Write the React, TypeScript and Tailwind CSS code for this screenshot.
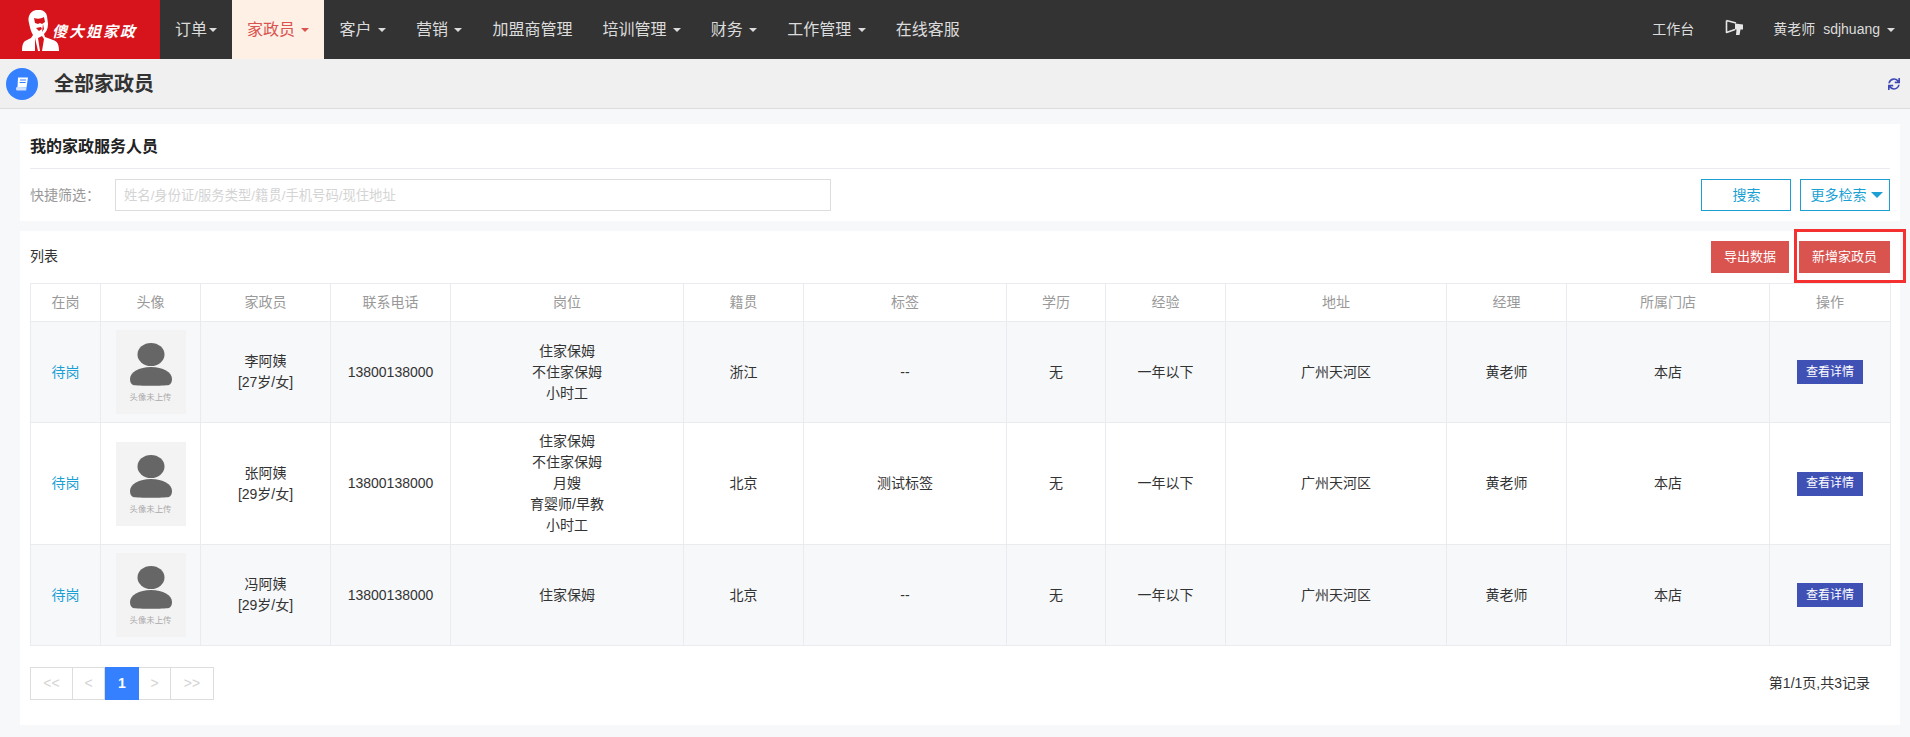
import { FaSync } from "react-icons/fa";

const FONT = "font-['Liberation_Sans','Noto_Sans_CJK_SC',sans-serif]";

const navItems = [
  { label: "订单", caret: "tight" },
  { label: "家政员", caret: "wide", active: true },
  { label: "客户", caret: "wide" },
  { label: "营销", caret: "wide" },
  { label: "加盟商管理" },
  { label: "培训管理", caret: "wide" },
  { label: "财务", caret: "wide" },
  { label: "工作管理", caret: "wide" },
  { label: "在线客服" },
];

const columns = [
  { title: "在岗", width: "w-[70px]" },
  { title: "头像", width: "w-[100px]" },
  { title: "家政员", width: "w-[130px]" },
  { title: "联系电话", width: "w-[120px]" },
  { title: "岗位", width: "w-[233px]" },
  { title: "籍贯", width: "w-[120px]" },
  { title: "标签", width: "w-[203px]" },
  { title: "学历", width: "w-[99px]" },
  { title: "经验", width: "w-[120px]" },
  { title: "地址", width: "w-[221px]" },
  { title: "经理", width: "w-[120px]" },
  { title: "所属门店", width: "w-[203px]" },
  { title: "操作", width: "w-[121px]" },
];

const rows = [
  { name: "李阿姨", age: "[27岁/女]", jobs: ["住家保姆", "不住家保姆", "小时工"], place: "浙江", tag: "--" },
  { name: "张阿姨", age: "[29岁/女]", jobs: ["住家保姆", "不住家保姆", "月嫂", "育婴师/早教", "小时工"], place: "北京", tag: "测试标签" },
  { name: "冯阿姨", age: "[29岁/女]", jobs: ["住家保姆"], place: "北京", tag: "--" },
];

const cell = "border border-[#e9ebee] text-center align-middle p-2 leading-[21px]";

function Caret({ className }: { className: string }) {
  return <span className={`inline-block w-0 h-0 align-middle border-x-4 border-x-transparent border-t-4 ${className}`} />;
}

function Logo() {
  return (
    <div className="w-[160px] h-full bg-[#d7141c] flex items-center shrink-0 text-white">
      <svg width="38" height="41" viewBox="0 0 38 41" className="ml-[22px] mt-[1px] shrink-0" fill="#fff">
        <path d="M7 13C5 6 9 1 14 0c5-1 10 1 11 6l1 8c0 5-2 8-4 10l1 3 8 3c4 1 6 4 6 11H0c0-6 1-8 3-10l6-3 2-3c-2-3-3-7-4-12z" />
        <path d="M12 8c3 1 7 1 10-1l1 5-3 2-2-1-2 1-3-1zM14 18l5-1 1 2-3 2zM21 14l1 5-2 3z" fill="#d7141c" />
        <path d="M13 28l3 13h-3zM20 26l2 3-2 12h-2l-2-13z" fill="#d7141c" />
      </svg>
      <span className="ml-[-8px] mt-[1px] text-[15px] tracking-[2px] leading-none font-bold italic whitespace-nowrap font-['Noto_Sans_CJK_SC',sans-serif]">
        傻大姐家政
      </span>
    </div>
  );
}

function Header() {
  return (
    <header className="h-[59px] bg-[#333333] flex text-[16px] text-[#dcdcdc]">
      <Logo />
      <nav className="flex">
        {navItems.map((item) => (
          <div
            key={item.label}
            className={`flex items-center px-[15px] ${item.active ? "bg-[#fff0e6] text-[#d9534f]" : ""}`}
          >
            <span>{item.label}</span>
            {item.caret && (
              <Caret
                className={`${item.caret === "wide" ? "ml-[6.45px]" : "ml-[2px]"} ${item.active ? "border-t-[#d9534f]" : "border-t-[#dcdcdc]"}`}
              />
            )}
          </div>
        ))}
      </nav>
      <div className="ml-auto flex items-center text-[14px] pr-[15px]">
        <span>工作台</span>
        <svg width="19" height="17" viewBox="0 0 19 17" className="ml-[31px] mr-[29px] mb-[5px]" fill="none">
          <path d="M1.500 1.500 11 4M1.500 1.500V13.500L10 10.500" stroke="#e6e6e6" strokeWidth="1.600" strokeLinejoin="round" />
          <path d="M10 4.500 18 5.500V10.500H15.500L14.500 16H11L11.500 10.500H10z" fill="#e6e6e6" />
        </svg>
        <span>黄老师</span>
        <span className="ml-2">sdjhuang</span>
        <Caret className="ml-[7px] border-t-[#dcdcdc]" />
      </div>
    </header>
  );
}

function PageTitle() {
  return (
    <div className="h-[50px] bg-[#f0f0f0] border-b border-[#dddddd] flex items-center pl-[6px] pr-[10px]">
      <div className="w-[32px] h-[32px] rounded-full bg-[#3480ff] flex items-center justify-center">
        <svg width="14" height="14" viewBox="0 0 14 14" fill="#fff">
          <path d="M3 .5h10L11.500 10.500H2.500z" />
          <path d="M5 3h6M4.600 5.500h6" stroke="#3480ff" strokeWidth="1" />
          <path d="M1 11.500c0-1 .5-1.500 1.500-1.500l9 .5-.3 3H2c-.7 0-1-1-1-2z" fill="#cfe0ff" />
        </svg>
      </div>
      <h1 className="ml-[16px] text-[20px] font-bold text-[#333333]">全部家政员</h1>
      <FaSync className="ml-auto w-[12px] h-[12px] text-[#3f48b5]" />
    </div>
  );
}

function FilterCard() {
  return (
    <section className="bg-white h-[97px] px-[10px]">
      <h2 className="h-[45px] pt-[1px] border-b border-[#e9ebee] text-[16px] font-bold text-[#222222] flex items-center">
        我的家政服务人员
      </h2>
      <div className="mt-[10px] flex items-center text-[14px]">
        <span className="w-[85px] text-[#999999]">快捷筛选：</span>
        <input
          readOnly
          placeholder="姓名/身份证/服务类型/籍贯/手机号码/现住地址"
          className="w-[716px] h-[32px] border border-[#dddddd] px-[8px] text-[13.33px] outline-none placeholder:text-[#d4d4d4]"
        />
        <button className="ml-auto w-[90px] h-[32px] border border-[#1c9fd3] text-[#1c9fd3] pl-[1px]">搜索</button>
        <button className="ml-[9px] w-[90px] h-[32px] border border-[#1c9fd3] text-[#1c9fd3] flex items-center justify-center gap-[4px] pl-[3px]">
          更多检索
          <span className="w-0 h-0 border-x-[6px] border-x-transparent border-t-[6px] border-t-[#1c9fd3]" />
        </button>
      </div>
    </section>
  );
}

function Avatar() {
  return (
    <div className="mx-auto w-[70px] h-[84px] bg-[#f3f3f3] flex flex-col items-center pt-[13px]">
      <svg width="42" height="43" viewBox="0 0 42 43" fill="#666666">
        <ellipse cx="21" cy="11.500" rx="13.500" ry="11.500" />
        <path d="M0 36C0 29 9 24 21 24s21 5 21 12c0 3-1 5-3 6-5 1-31 1-36 0-2-1-3-3-3-6z" />
      </svg>
      <span className="mt-[5px] text-[8.400px] leading-[12px] text-[#aaaaaa] whitespace-nowrap">头像未上传</span>
    </div>
  );
}

function ListCard() {
  return (
    <section className="relative bg-white mt-[10px] h-[494px] px-[10px]">
      <div className="h-[52px] flex items-center">
        <span className="text-[14px] text-[#333333] mb-[2px]">列表</span>
        <button className="ml-auto w-[78px] h-[32px] bg-[#d9534f] text-white text-[13px]">导出数据</button>
        <button className="ml-[10px] w-[91px] h-[32px] bg-[#d9534f] text-white text-[13px]">新增家政员</button>
      </div>
      {/* annotation box from the screenshot */}
      <div className="absolute left-[1774px] top-[-2px] w-[112px] h-[54px] border-[3px] border-[#f53030]" />
      <table className="w-[1860px] table-fixed border-collapse text-[14px] text-[#333333]">
        <thead>
          <tr className="h-[38px]">
            {columns.map((col) => (
              <th key={col.title} className={`${col.width} border border-[#e9ebee] font-normal text-[#999999] text-center`}>
                {col.title}
              </th>
            ))}
          </tr>
        </thead>
        <tbody>
          {rows.map((row, i) => (
            <tr key={row.name} className={i % 2 === 0 ? "bg-[#f7f8fa]" : "bg-white"}>
              <td className={`${cell} text-[#1c9fd3]`}>待岗</td>
              <td className={cell}><Avatar /></td>
              <td className={cell}>
                <div>{row.name}</div>
                <div>{row.age}</div>
              </td>
              <td className={cell}>13800138000</td>
              <td className={cell}>
                {row.jobs.map((job) => (
                  <div key={job}>{job}</div>
                ))}
              </td>
              <td className={cell}>{row.place}</td>
              <td className={cell}>{row.tag}</td>
              <td className={cell}>无</td>
              <td className={cell}>一年以下</td>
              <td className={cell}>广州天河区</td>
              <td className={cell}>黄老师</td>
              <td className={cell}>本店</td>
              <td className={cell}>
                <button className="w-[66px] h-[24px] bg-[#3f51b5] text-white text-[12px] align-middle">查看详情</button>
              </td>
            </tr>
          ))}
        </tbody>
      </table>
      <div className="mt-[21px] flex items-center justify-between text-[14px]">
        <div className="flex h-[33px] text-[#d4d4d4]">
          <span className="w-[43px] border border-[#dddddd] flex items-center justify-center">&lt;&lt;</span>
          <span className="w-[32px] border border-l-0 border-[#dddddd] flex items-center justify-center">&lt;</span>
          <span className="w-[34px] bg-[#3480ff] text-white font-bold flex items-center justify-center">1</span>
          <span className="w-[32px] border border-l-0 border-[#dddddd] flex items-center justify-center">&gt;</span>
          <span className="w-[43px] border border-l-0 border-[#dddddd] flex items-center justify-center">&gt;&gt;</span>
        </div>
        <span className="pr-[20px] text-[#333333]">第1/1页,共3记录</span>
      </div>
    </section>
  );
}

export default function App() {
  return (
    <div className={`${FONT} w-[1910px] h-[737px] overflow-hidden bg-[#f7f8fa] text-[14px]`}>
      <Header />
      <PageTitle />
      <main className="pl-[20px] pr-[10px] pt-[15px]">
        <FilterCard />
        <ListCard />
      </main>
    </div>
  );
}
